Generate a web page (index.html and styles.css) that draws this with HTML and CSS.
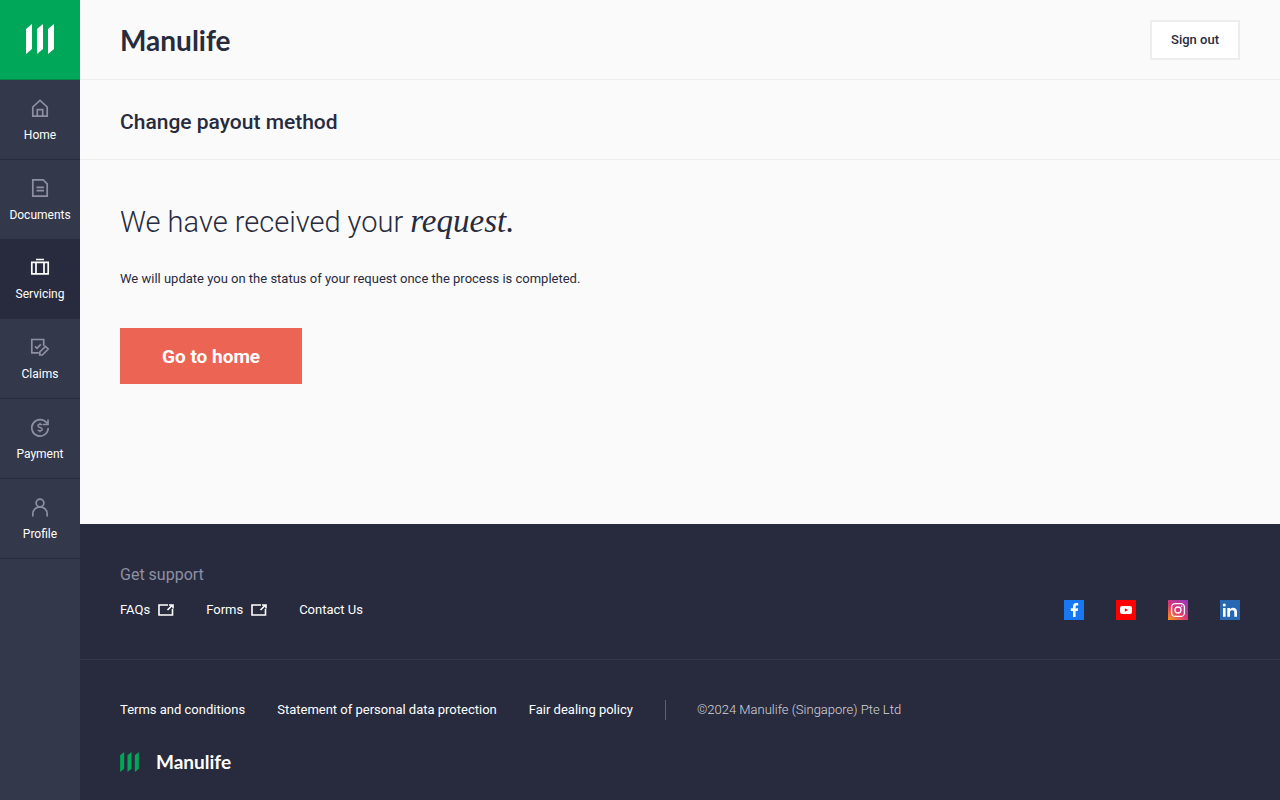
FILE: index.html
```html
<!DOCTYPE html>
<html lang="en">
<head>
<meta charset="utf-8">
<meta name="viewport" content="width=device-width, initial-scale=1">
<title>Change payout method - Manulife</title>
<link rel="stylesheet" href="styles.css">
</head>
<body>
<div class="app">
  <aside class="sidebar">
    <a class="brand-mark" href="#" aria-label="Manulife">
      <svg width="28" height="30" viewBox="0 0 28 30" fill="#fff"><path d="M0 5 6 0v25l-6 5zM11 5l6-5v25l-6 5zM22 5l6-5v25l-6 5z"/></svg>
    </a>
    <nav class="side-nav">
      <a class="nav-item" href="#">
        <svg class="nav-icon" viewBox="0 0 20 20"><path d="M2.8 8 10 1.3 17.2 8v9.2H2.8zM7.3 17v-6.3h5.4V17"/></svg>
        <span>Home</span>
      </a>
      <a class="nav-item" href="#">
        <svg class="nav-icon" viewBox="0 0 20 20"><path d="M2.8 .9h10.4l4 4v12.3H2.8zM6.5 8.300h7.500M6.500 11.700h7.500"/></svg>
        <span>Documents</span>
      </a>
      <a class="nav-item nav-item-active" href="#">
        <svg class="nav-icon" viewBox="0 0 20 20"><path d="M1.8 4.300h16.400v11.600H1.8zM6 5v11M14 5v11M6 1.500h8"/></svg>
        <span>Servicing</span>
      </a>
      <a class="nav-item" href="#">
        <svg class="nav-icon" viewBox="0 0 20 20"><path d="M13.700 8V1.500H1.800v13.400h7M5 8.300l2 2L10.800 6.300M9.800 17v-3l5.600-5.600 2.800 2.600-5.800 6z"/></svg>
        <span>Claims</span>
      </a>
      <a class="nav-item" href="#">
        <svg class="nav-icon" viewBox="0 0 20 20"><path d="M16.800 5.300A8.200 8.200 0 1 0 18.200 10M18 1.500v5h-5"/><path stroke-width="1.400" d="M12.200 7C11 5.700 7.900 6 7.900 7.700c0 2.300 4.400 1.200 4.400 3.500 0 1.800-3.200 2.200-4.600.7M10 4.700v1.500M10 12.500V14.200"/></svg>
        <span>Payment</span>
      </a>
      <a class="nav-item" href="#">
        <svg class="nav-icon" viewBox="0 0 20 20"><circle cx="10" cy="5" r="3.900"/><path d="M2.800 18.500V16a7.200 7.200 0 0 1 14.400 0v2.500"/></svg>
        <span>Profile</span>
      </a>
    </nav>
  </aside>
  <div class="page">
    <header class="topbar">
      <span class="wordmark">Manulife</span>
      <button class="sign-out" type="button">Sign out</button>
    </header>
    <div class="title-bar"><h1 class="page-title">Change payout method</h1></div>
    <main class="content">
      <h2 class="headline">We have received your <em class="headline-accent">request.</em></h2>
      <p class="message">We will update you on the status of your request once the process is completed.</p>
      <button class="primary" type="button">Go to home</button>
    </main>
    <footer class="footer">
      <section class="support">
        <div>
          <h3 class="support-title">Get support</h3>
          <div class="support-links">
            <a class="footer-link" href="#">FAQs <svg class="external" viewBox="0 0 16 12"><path d="M10 1H1v10h13.500V5M9.500 6 14 1.500M11 1h4v3.500"/></svg></a>
            <a class="footer-link" href="#">Forms <svg class="external" viewBox="0 0 16 12"><path d="M10 1H1v10h13.500V5M9.500 6 14 1.500M11 1h4v3.500"/></svg></a>
            <a class="footer-link" href="#">Contact Us</a>
          </div>
        </div>
        <div class="social">
          <a href="#" aria-label="Facebook"><svg viewBox="0 0 20 20"><path fill="#1877f2" d="M0 0h20v20H0z"/><path fill="#fff" d="M9 17v-6H6.800V8.300H9V6.500C9 4 10.300 3 12.300 3h1.900v2.500h-1.300c-1 0-1.300.4-1.300 1.300v1.500h2.500l-.4 2.700h-2.100v6z"/></svg></a>
          <a href="#" aria-label="YouTube"><svg viewBox="0 0 20 20"><path fill="#f00" d="M0 0h20v20H0z"/><rect x="4" y="6" width="12" height="8" rx="2" fill="#fff"/><path fill="#f00" d="m8.900 8.200 3.200 1.800-3.200 1.800z"/></svg></a>
          <a href="#" aria-label="Instagram"><svg viewBox="0 0 20 20"><defs><linearGradient id="ig" x1="0" y1="1" x2=".8" y2="0"><stop stop-color="#ff9a16"/><stop offset=".5" stop-color="#dc3674"/><stop offset="1" stop-color="#9b36b7"/></linearGradient></defs><path fill="url(#ig)" d="M0 0h20v20H0z"/><g fill="none" stroke="#fff" stroke-width="1.300"><rect x="3.600" y="3.600" width="12.800" height="12.800" rx="3.500"/><circle cx="10" cy="10" r="3"/></g><circle cx="13.700" cy="6.300" r=".8" fill="#fff"/></svg></a>
          <a href="#" aria-label="LinkedIn"><svg viewBox="0 0 20 20"><path fill="#2867b2" d="M0 0h20v20H0z"/><path fill="#fff" d="M3 8h2.600v8.800H3zM7.300 8H10v1.200c1.800-2.400 7-2 7 2.300v5.300h-2.700V12c0-2.500-4.300-2.500-4.300 0v4.800H7.300z"/><circle cx="4.300" cy="5" r="1.600" fill="#fff"/></svg></a>
        </div>
      </section>
      <section class="legal">
        <div class="legal-row">
          <a class="footer-link" href="#">Terms and conditions</a>
          <a class="footer-link" href="#">Statement of personal data protection</a>
          <a class="footer-link" href="#">Fair dealing policy</a>
          <span class="copyright">©2024 Manulife (Singapore) Pte Ltd</span>
        </div>
        <div class="footer-brand">
          <svg width="19" height="20" viewBox="0 0 28 30" fill="#00a758"><path d="M0 5 6 0v25l-6 5zM11 5l6-5v25l-6 5zM22 5l6-5v25l-6 5z"/></svg>
          <span class="wordmark-small">Manulife</span>
        </div>
      </section>
    </footer>
  </div>
</div>
</body>
</html>
```
FILE: styles.css
```css
* { box-sizing: border-box; }
body { margin: 0; font-family: Roboto, "Liberation Sans", sans-serif; color: #282b3e; background: #fafafa; }
a { color: inherit; text-decoration: none; }
h1, h2, h3, p { margin: 0; }
button { font-family: inherit; cursor: pointer; }
svg { display: block; }
.app { display: flex; min-height: 100vh; }
.sidebar { flex: none; width: 80px; background: #34384b; }
.brand-mark { display: flex; align-items: center; justify-content: center; height: 80px; padding-bottom: 1px; background: #00a758; border-bottom: 1px solid #058548; }
.nav-item { display: flex; flex-direction: column; align-items: center; gap: 7px; height: 80px; padding-top: 19px; border-bottom: 1px solid #282b3e; color: #fff; font-size: 12px; line-height: 18px; }
.nav-item-active { margin-top: -1px; background: #282b3e; }
.nav-icon { width: 20px; height: 20px; fill: none; stroke: #8e90a2; stroke-width: 1.7; }
.nav-item-active .nav-icon { stroke: #fff; }
.page { flex: 1; min-width: 0; display: flex; flex-direction: column; }
.topbar { display: flex; align-items: center; justify-content: space-between; height: 80px; padding: 0 40px; border-bottom: 1px solid #ededed; }
.wordmark { font-family: Lato, sans-serif; font-size: 28px; line-height: 40px; font-weight: 700; }
.sign-out { height: 40px; padding: 0 19px; border: 2px solid #ededed; background: #fff; color: #282b3e; font-size: 13px; font-weight: 500; }
.title-bar { display: flex; align-items: center; height: 80px; padding: 4px 40px 0; border-bottom: 1px solid #ededed; }
.page-title { font-size: 21px; line-height: 32px; font-weight: 500; }
.content { flex: 1; padding: 40px; }
.headline { font-size: 29px; line-height: 45px; font-weight: 300; }
.headline-accent { font-family: "Liberation Serif", serif; font-size: 33px; line-height: 1; font-weight: 400; }
.message { margin-top: 24px; font-size: 13px; line-height: 20px; }
.primary { margin-top: 39px; height: 56px; padding: 0 42px; border: 0; background: #ec6453; color: #fff; font-size: 19px; font-weight: 700; }
.footer { background: #282b3e; color: #fff; font-size: 13px; line-height: 20px; }
.support { display: flex; justify-content: space-between; align-items: flex-end; padding: 40px 40px 39px; border-bottom: 1px solid #34384b; }
.support-title { margin-bottom: 14px; color: #8e90a2; font-size: 16px; line-height: 22px; font-weight: 400; }
.support-links, .social { display: flex; gap: 32px; }
.footer-link { display: flex; align-items: center; gap: 8px; }
.external { width: 16px; height: 12px; fill: none; stroke: #fff; stroke-width: 1.6; }
.social svg { width: 20px; height: 20px; }
.legal { padding: 40px 40px 28px; }
.legal-row { display: flex; gap: 32px; }
.copyright { padding-left: 31px; border-left: 1px solid #5e6073; color: #d4d5dc; font-weight: 300; }
.footer-brand { display: flex; align-items: center; gap: 17px; margin-top: 32px; }
.wordmark-small { font-family: Lato, sans-serif; font-size: 19px; line-height: 20px; font-weight: 700; }
```
